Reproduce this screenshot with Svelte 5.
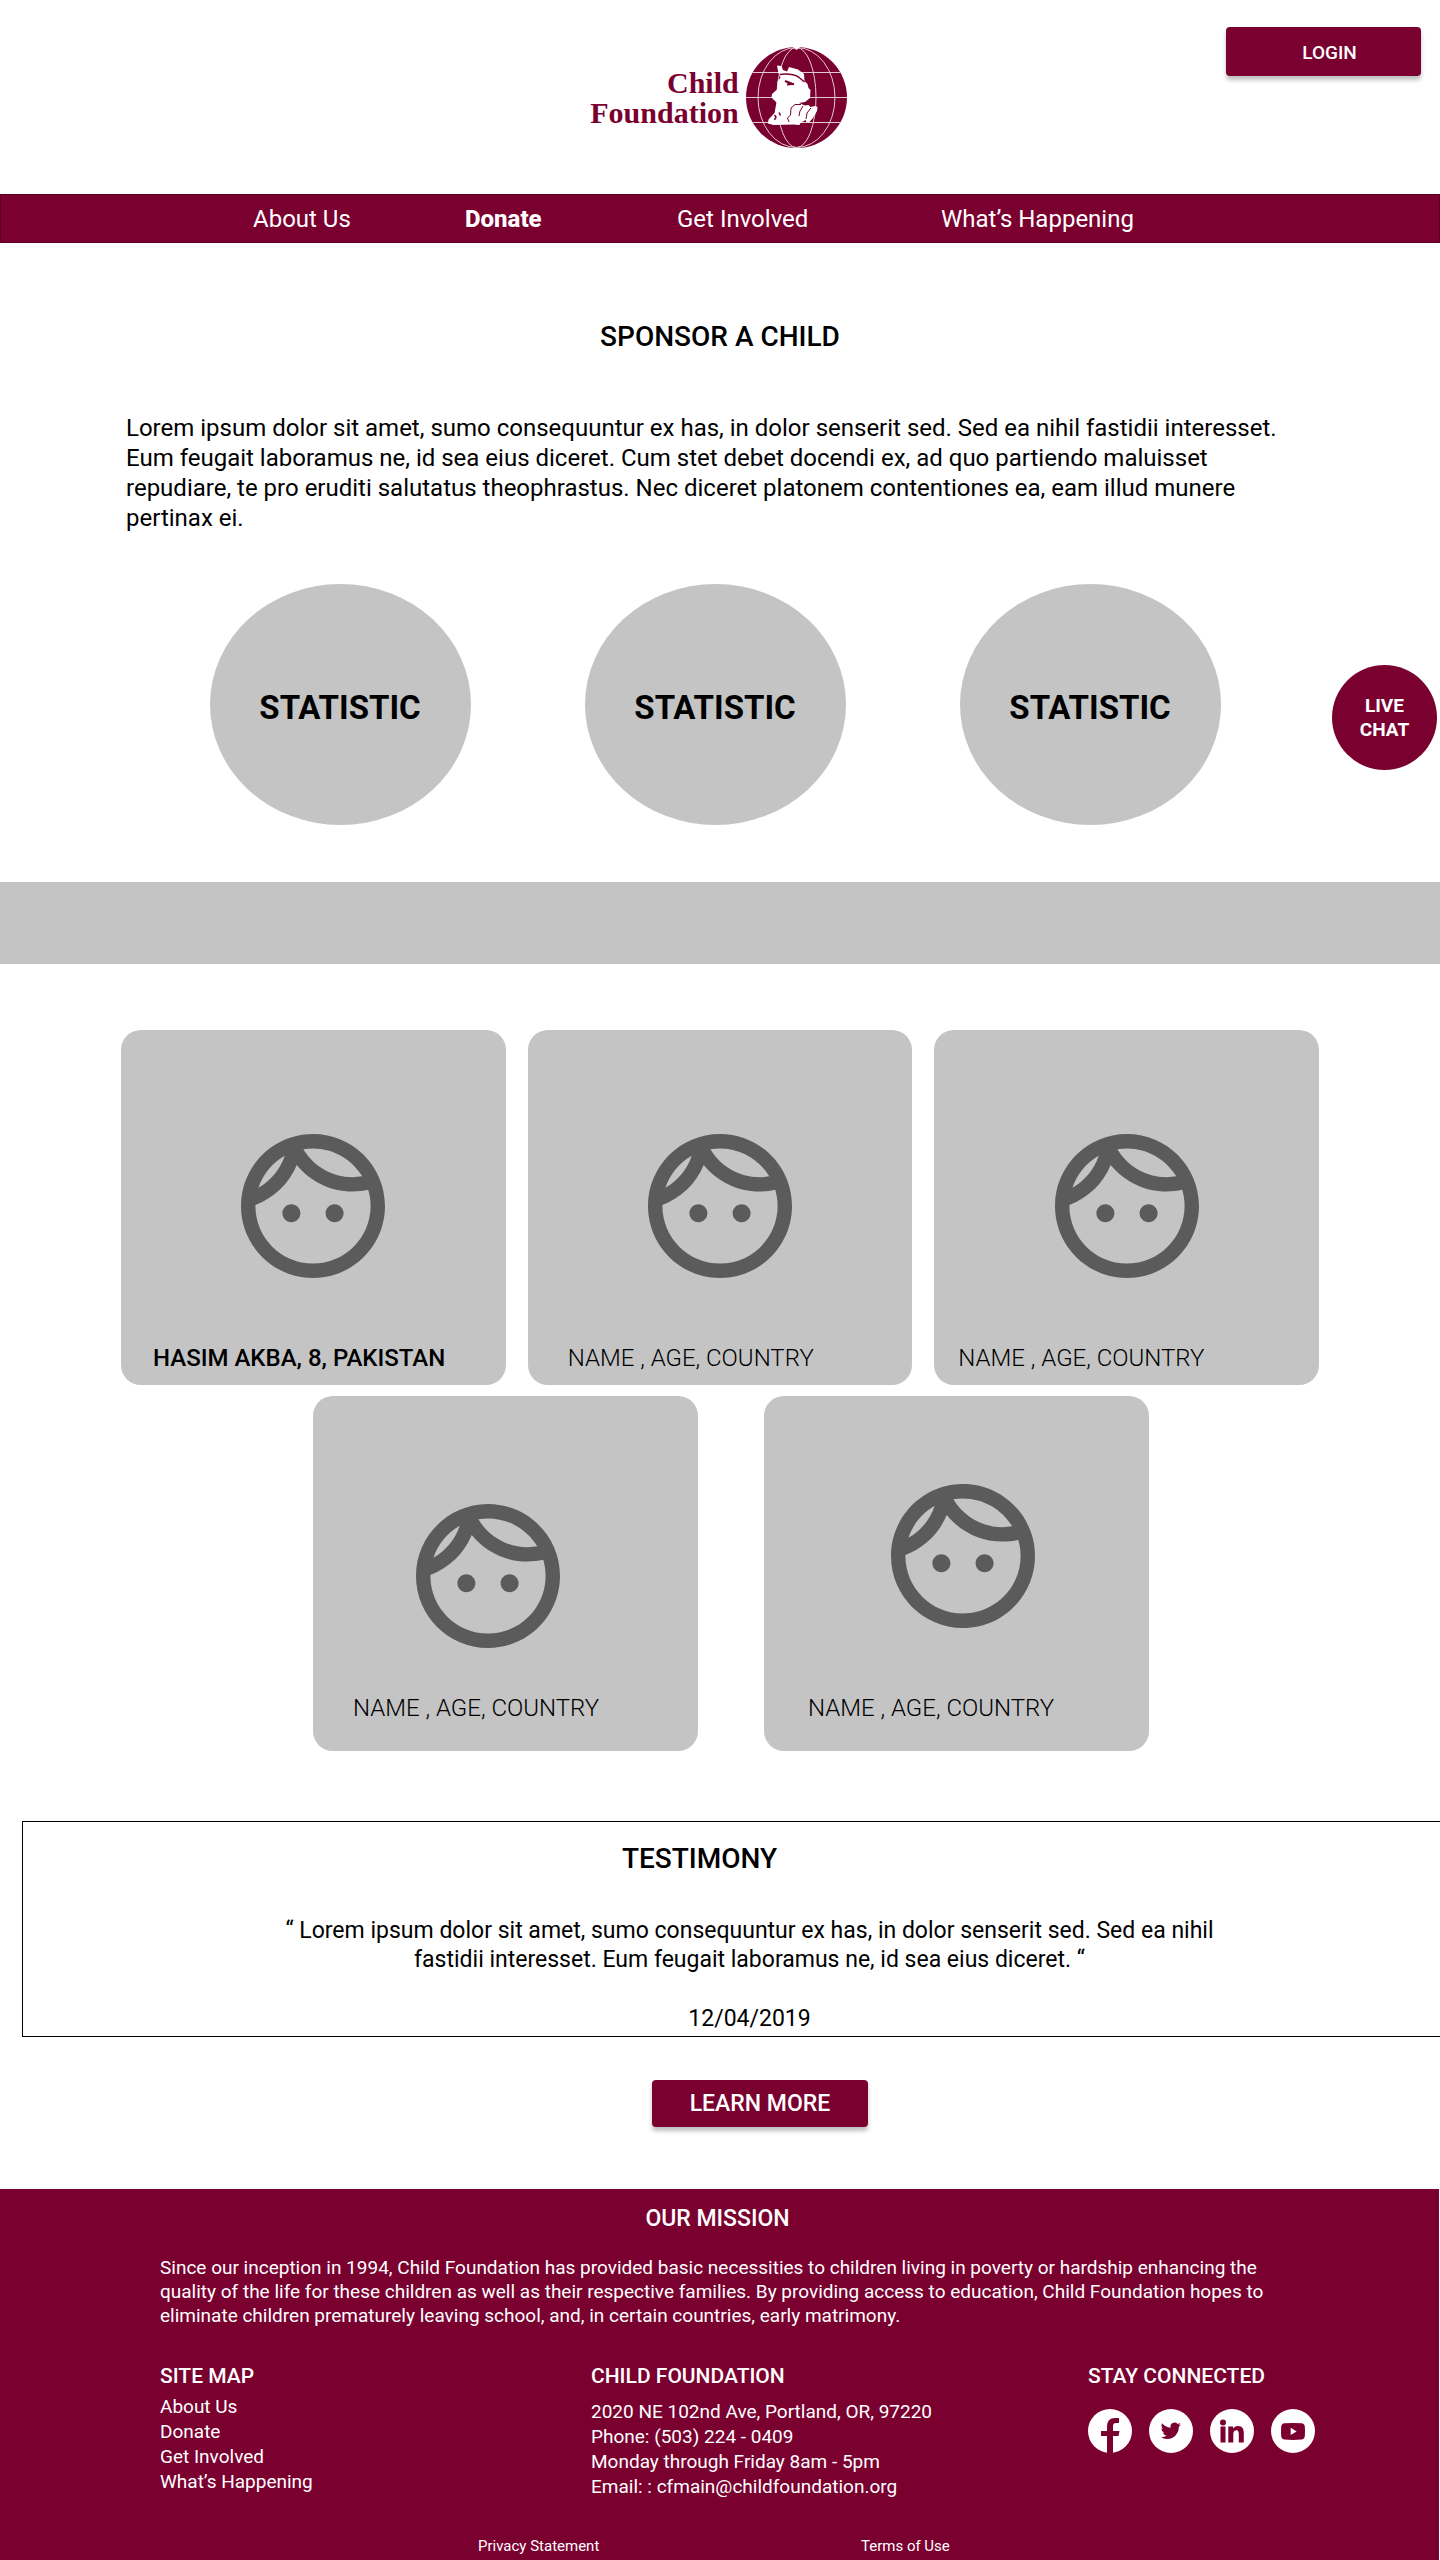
<script>
  const nav = [
    { label: 'About Us', cls: '' },
    { label: 'Donate', cls: 'current' },
    { label: 'Get Involved', cls: '' },
    { label: 'What’s Happening', cls: '' }
  ];
  const rows = [
    {
      cls: 'three',
      cards: [
        { name: 'HASIM AKBA, 8, PAKISTAN', cls: 'inset-md featured' },
        { name: 'NAME , AGE, COUNTRY', cls: 'inset-lg' },
        { name: 'NAME , AGE, COUNTRY', cls: 'inset-sm' }
      ]
    },
    {
      cls: 'two',
      cards: [
        { name: 'NAME , AGE, COUNTRY', cls: 'inset-lg low' },
        { name: 'NAME , AGE, COUNTRY', cls: 'inset-xl high' }
      ]
    }
  ];
  const stats = ['STATISTIC', 'STATISTIC', 'STATISTIC'];
</script>

<div class="page">
  <header>
    <a class="logo" href="#home" aria-label="Child Foundation home">
      <span class="wordmark">Child<br />Foundation</span>
      <svg class="globe" viewBox="0 0 101 101" aria-hidden="true">
        <circle cx="50.5" cy="50.5" r="50.5" fill="#7a002f" />
        <g fill="none" stroke="#e3c9cf" stroke-width="1">
          <path d="M7 25.500H94M0 50.500H101M7 75.500H94" />
          <ellipse cx="50.5" cy="50.5" rx="38.5" ry="50" />
          <ellipse cx="50.5" cy="50.5" rx="19.5" ry="50" />
        </g>
        <path d="M47 0h7l-3.500 3z" fill="#fff" />
        <path fill="#fff" d="M31 18.500l4.500.5 1.500 4 4 1.500 2-4.500 9 2.500 6 4.500.5 7 3 3 1 4 2 2-.5 8-5 4-6 1 6 2.500 3.500-.5 2 2 4.500-1 2.500 1-.5 4-4 7-4 4.500-2.500-.5-1-2-5 3-1 2-6-.5-20 .5-5.500-1.500.5-4 6-6.500 2-10.500-5-5 .5-3.500 5-4.500.5-8 3-4-2-4z" />
        <g fill="none" stroke="#7a002f" stroke-width="1.500">
          <path d="M33.500 27.500c8-1 14-.5 19 2.500l6 5" />
          <path d="M39 34l9 3.500M41 37.500l5-.5" stroke-width="2" />
          <path d="M28.500 68l1.500 2-1.500 3M33 65.500l1.500 3" />
          <path d="M43 75l-1.500-4 3-3 .5-7 4-3.500 6 0M53 69l1-5 3-5M60 72l1-6 4-5" stroke-width="1" />
        </g>
      </svg>
    </a>
    <button class="btn login" type="button">LOGIN</button>
  </header>

  <nav aria-label="Main">
    {#each nav as item}
      <a href="#top" class={item.cls}>{item.label}</a>
    {/each}
  </nav>

  <main>
    <h1>SPONSOR A CHILD</h1>
    <p class="intro">
      Lorem ipsum dolor sit amet, sumo consequuntur ex has, in dolor senserit sed. Sed ea nihil fastidii interesset.
      Eum feugait laboramus ne, id sea eius diceret. Cum stet debet docendi ex, ad quo partiendo maluisset
      repudiare, te pro eruditi salutatus theophrastus. Nec diceret platonem contentiones ea, eam illud munere
      pertinax ei.
    </p>

    <div class="stats">
      {#each stats as stat}
        <div class="stat">{stat}</div>
      {/each}
    </div>

    <div class="band"></div>

    <div class="cards">
      {#each rows as row}
        <div class="row {row.cls}">
          {#each row.cards as card}
            <article class="card {card.cls}">
              <svg class="face" viewBox="2 2 20 20" aria-hidden="true">
                <path d="M10.25 13c0 .69-.56 1.25-1.25 1.25S7.75 13.69 7.75 13s.56-1.25 1.25-1.25 1.25.56 1.25 1.25zM15 11.75c-.69 0-1.25.56-1.25 1.25s.56 1.25 1.25 1.25 1.25-.56 1.25-1.25-.56-1.25-1.25-1.25zm7 .25c0 5.52-4.48 10-10 10S2 17.52 2 12 6.48 2 12 2s10 4.48 10 10zM10.66 4.12C12.06 6.44 14.6 8 17.5 8c.46 0 .91-.05 1.34-.12C17.44 5.56 14.9 4 12 4c-.46 0-.91.05-1.34.12zM4.42 9.47c1.71-.97 3.03-2.55 3.66-4.44C6.37 6 5.05 7.58 4.42 9.47zM20 12c0-.78-.12-1.53-.33-2.24-.7.15-1.42.24-2.17.24-3.13 0-5.92-1.44-7.76-3.69C8.69 8.87 6.6 10.88 4 11.86c.01.04 0 .09 0 .14 0 4.41 3.59 8 8 8s8-3.59 8-8z" />
              </svg>
              <h3>{card.name}</h3>
            </article>
          {/each}
        </div>
      {/each}
    </div>

    <section class="testimony">
      <h2>TESTIMONY</h2>
      <blockquote>
        “ Lorem ipsum dolor sit amet, sumo consequuntur ex has, in dolor senserit sed. Sed ea nihil
        fastidii interesset. Eum feugait laboramus ne, id sea eius diceret. “
      </blockquote>
      <time datetime="2019-12-04">12/04/2019</time>
    </section>

    <div class="more">
      <button class="btn learn" type="button">LEARN MORE</button>
    </div>
  </main>

  <footer>
    <h2>OUR MISSION</h2>
    <p class="mission">
      Since our inception in 1994, Child Foundation has provided basic necessities to children living in poverty or hardship enhancing the
      quality of the life for these children as well as their respective families. By providing access to education, Child Foundation hopes to
      eliminate children prematurely leaving school, and, in certain countries, early matrimony.
    </p>
    <div class="columns">
      <div class="col">
        <h3>SITE MAP</h3>
        <ul>
          {#each nav as item}
            <li><a href="#top">{item.label}</a></li>
          {/each}
        </ul>
      </div>
      <div class="col">
        <h3>CHILD FOUNDATION</h3>
        <address>
          2020 NE 102nd Ave, Portland, OR, 97220<br />
          Phone: (503) 224 - 0409<br />
          Monday through Friday 8am - 5pm<br />
          Email: : cfmain@childfoundation.org
        </address>
      </div>
      <div class="col">
        <h3>STAY CONNECTED</h3>
        <div class="social">
          <a href="#facebook" aria-label="Facebook">
            <svg viewBox="0 0 44 44"><circle cx="22" cy="22" r="22" fill="#fff" /><path fill="#7a002f" d="M19 44V27h-6v-5h6v-4c0-6 3-9 8-9h4v5h-3c-2 0-3 1-3 3v5h6.500l-1 5H25v17z" /></svg>
          </a>
          <a href="#twitter" aria-label="Twitter">
            <svg viewBox="0 0 44 44"><circle cx="22" cy="22" r="22" fill="#fff" /><path fill="#7a002f" transform="translate(11.700 11.700) scale(.84)" d="M23.953 4.570a10 10 0 0 1-2.825.775 4.958 4.958 0 0 0 2.163-2.723c-.951.555-2.005.959-3.127 1.184a4.920 4.920 0 0 0-8.384 4.482C7.690 8.095 4.067 6.130 1.640 3.162a4.822 4.822 0 0 0-.666 2.475c0 1.710.870 3.213 2.188 4.096a4.904 4.904 0 0 1-2.228-.616v.060a4.923 4.923 0 0 0 3.946 4.827 4.996 4.996 0 0 1-2.212.085 4.936 4.936 0 0 0 4.604 3.417 9.867 9.867 0 0 1-6.102 2.105c-.390 0-.779-.023-1.170-.067a13.995 13.995 0 0 0 7.557 2.209c9.053 0 13.998-7.496 13.998-13.985 0-.210 0-.420-.015-.630A9.935 9.935 0 0 0 24 4.590z" /></svg>
          </a>
          <a href="#linkedin" aria-label="LinkedIn">
            <svg viewBox="0 0 44 44"><circle cx="22" cy="22" r="22" fill="#fff" /><g fill="#7a002f"><circle cx="13" cy="13.500" r="3" /><path d="M10.500 17.500h5v16h-5zM18.300 17.500H23v2.200c1-1.700 2.600-2.700 5-2.700 4.500 0 5.800 3 5.800 7.300v9.200h-5v-8.200c0-2.300-.3-4-2.500-4s-3 1.700-3 4v8.200h-5z" /></g></svg>
          </a>
          <a href="#youtube" aria-label="YouTube">
            <svg viewBox="0 0 44 44"><circle cx="22" cy="22" r="22" fill="#fff" /><path fill="#7a002f" d="M13.500 14.300q8.500-.8 17 0 3 .2 3.300 3.200.5 4.900 0 9.800-.3 3-3.300 3.200-8.500.8-17 0-3-.2-3.300-3.200-.5-4.900 0-9.800.3-3 3.300-3.200z" /><path fill="#fff" d="M19.700 18.800l6 3.600-6 3.600z" /></svg>
          </a>
        </div>
      </div>
    </div>
    <div class="legal">
      <a href="#privacy">Privacy Statement</a>
      <a href="#terms">Terms of Use</a>
    </div>
  </footer>

  <button class="chat" type="button">LIVE<br />CHAT</button>
</div>

<style>
  :global(body) {
    margin: 0;
    background: #fff;
  }
  .page {
    position: relative;
    font-family: Roboto, 'Liberation Sans', sans-serif;
    color: #000;
    overflow-x: hidden;
  }
  h1, h2, h3, p, ul, blockquote {
    margin: 0;
    padding: 0;
  }
  a {
    color: inherit;
    text-decoration: none;
  }
  header {
    display: grid;
    grid-template-columns: 1fr auto 1fr;
    align-items: start;
    min-height: 194px;
    box-sizing: border-box;
    padding: 27px 19px 0 12px;
  }
  .logo {
    grid-column: 2;
    display: flex;
    align-items: center;
    gap: 7px;
    margin-top: 20px;
    padding-left: 4px;
  }
  .wordmark {
    font: bold 30px/30px 'Liberation Serif', serif;
    color: #7a002f;
    text-align: right;
  }
  .globe {
    width: 101px;
    height: 101px;
  }
  .btn {
    border: 0;
    border-radius: 4px;
    background: #7a002f;
    color: #fff;
    font-family: inherit;
    box-shadow: 0 4px 4px rgba(0, 0, 0, 0.25);
    cursor: pointer;
  }
  .login {
    justify-self: end;
    width: 195px;
    height: 49px;
    padding: 2px 0 0 12px;
    font-size: 19px;
    font-weight: 500;
  }
  nav {
    display: grid;
    grid-template-columns: 212px 212px 264px auto;
    justify-content: start;
    align-items: center;
    min-height: 49px;
    box-sizing: border-box;
    padding-left: 17.5%;
    border: 1px solid #5c0023;
    background: #7a002f;
    color: #fff;
    font-size: 24px;
  }
  nav .current {
    font-weight: 800;
  }
  h1 {
    margin-top: 76px;
    text-align: center;
    font-size: 28px;
    line-height: 36px;
    font-weight: 500;
  }
  .intro {
    max-width: 1188px;
    margin: 58px auto 0;
    font-size: 24px;
    line-height: 30px;
  }
  .stats {
    display: flex;
    justify-content: center;
    gap: 114px;
    margin-top: 51px;
    padding-right: 10px;
  }
  .stat {
    display: flex;
    align-items: center;
    justify-content: center;
    width: 261px;
    height: 241px;
    box-sizing: border-box;
    padding-top: 6px;
    border-radius: 50%;
    background: #c4c4c4;
    font-size: 33px;
    font-weight: 700;
  }
  .band {
    height: 82px;
    margin-top: 57px;
    background: #c4c4c4;
  }
  .cards {
    display: grid;
    gap: 11px;
    max-width: 1198px;
    margin: 66px auto 0;
  }
  .row {
    display: grid;
  }
  .three {
    grid-template-columns: repeat(3, 1fr);
    gap: 22px;
  }
  .two {
    grid-template-columns: 385px 385px;
    justify-content: center;
    gap: 66px;
    padding-left: 22px;
  }
  .card {
    display: flex;
    flex-direction: column;
    min-height: 355px;
    box-sizing: border-box;
    padding-top: 104px;
    border-radius: 20px;
    background: #c4c4c4;
  }
  .face {
    width: 144px;
    height: 144px;
    align-self: center;
    fill: #5b5b5b;
  }
  .card h3 {
    margin-top: 64px;
    font-size: 24px;
    line-height: 32px;
    font-weight: 300;
  }
  .card.featured h3 { font-weight: 500; }
  .inset-sm h3 { padding-left: 24px; }
  .inset-md h3 { padding-left: 32px; }
  .inset-lg h3 { padding-left: 40px; }
  .inset-xl h3 { padding-left: 44px; }
  .low { padding-top: 108px; }
  .low .face { margin-right: 36px; }
  .low h3 { margin-top: 44px; }
  .high { padding-top: 88px; }
  .high .face { margin-left: 12px; }
  .testimony {
    display: flex;
    flex-direction: column;
    min-height: 216px;
    box-sizing: border-box;
    margin: 70px 0 0 22px;
    padding: 19px 0 0;
    border: 1px solid #000;
    border-right: 0;
    text-align: center;
    font-size: 23px;
    line-height: 29px;
  }
  .testimony h2 {
    padding-right: 64px;
    font-size: 28px;
    line-height: 36px;
    font-weight: 500;
  }
  blockquote {
    max-width: 960px;
    margin: 39px auto 0;
    padding-left: 36px;
  }
  time {
    margin-top: 30px;
    padding-left: 36px;
  }
  .more {
    display: flex;
    justify-content: center;
    margin-top: 43px;
    padding-left: 80px;
  }
  .learn {
    width: 216px;
    height: 47px;
    font-size: 23px;
    font-weight: 500;
  }
  footer {
    margin: 62px 1px 0 0;
    padding: 15px 120px 0 160px;
    min-height: 371px;
    box-sizing: border-box;
    background: #7a002f;
    color: #fff;
    font-size: 19px;
    line-height: 25px;
  }
  footer h2 {
    padding-right: 44px;
    text-align: center;
    font-size: 23px;
    line-height: 30px;
    font-weight: 500;
  }
  .mission {
    max-width: 1140px;
    margin-top: 22px;
    line-height: 24px;
  }
  .columns {
    display: grid;
    grid-template-columns: 431px 497px auto;
    margin-top: 33px;
  }
  .columns h3 {
    font-size: 21px;
    line-height: 30px;
    font-weight: 500;
  }
  ul {
    margin-top: 3px;
    list-style: none;
  }
  address {
    margin-top: 8px;
    font-style: normal;
  }
  .social {
    display: flex;
    gap: 17px;
    margin-top: 18px;
  }
  .social a,
  .social svg {
    display: block;
    width: 44px;
    height: 44px;
  }
  .legal {
    display: grid;
    grid-template-columns: 383px auto;
    justify-content: start;
    margin-top: 37px;
    padding-left: 318px;
    font-size: 15px;
    line-height: 20px;
  }
  .chat {
    position: absolute;
    top: 665px;
    right: 3px;
    width: 105px;
    height: 105px;
    padding: 0;
    border: 0;
    border-radius: 50%;
    background: #7a002f;
    color: #fff;
    font: 700 19px/24px Roboto, sans-serif;
    cursor: pointer;
  }
</style>
